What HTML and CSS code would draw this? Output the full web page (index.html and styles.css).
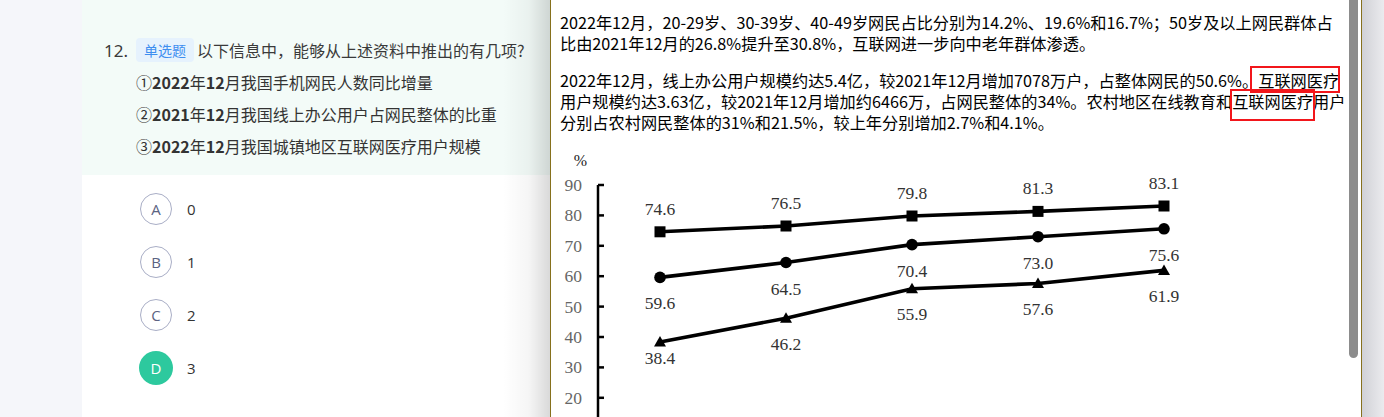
FILE: index.html
```html
<!DOCTYPE html>
<html lang="zh-CN">
<head>
    <meta charset="UTF-8">
    <meta name="viewport" content="width=device-width, initial-scale=1.0">
    <title>单选题</title>
    <link rel="stylesheet" href="styles.css">
</head>
<body>
    <div class="page">
        <aside class="side"></aside>
        <main class="main">
            <section class="question">
                <div class="q-head">
                    <span class="q-num">12.</span>
                    <span class="q-tag">单选题</span>
                    <span class="q-text">以下信息中，能够从上述资料中推出的有几项?</span>
                </div>
                <ul class="q-items">
                    <li>①<b>2022</b>年<b>12</b>月我国手机网民人数同比增量</li>
                    <li>②<b>2021</b>年<b>12</b>月我国线上办公用户占网民整体的比重</li>
                    <li>③<b>2022</b>年<b>12</b>月我国城镇地区互联网医疗用户规模</li>
                </ul>
            </section>

            <ul class="options">
                <li class="option"><span class="opt-key">A</span><span class="opt-text">0</span></li>
                <li class="option"><span class="opt-key">B</span><span class="opt-text">1</span></li>
                <li class="option"><span class="opt-key">C</span><span class="opt-text">2</span></li>
                <li class="option"><span class="opt-key opt-key-active">D</span><span class="opt-text">3</span></li>
            </ul>
        </main>
    </div>

    <!-- 资料弹窗 -->
    <div class="popup">
        <div class="popup-body">
            <p>2022年12月，20-29岁、30-39岁、40-49岁网民占比分别为14.2%、19.6%和16.7%；50岁及以上网民群体占<br>比由2021年12月的26.8%提升至30.8%，互联网进一步向中老年群体渗透。</p>
            <p>2022年12月，线上办公用户规模约达5.4亿，较2021年12月增加7078万户，占整体网民的50.6%。<span class="mark mark-a">互联网医疗</span><br>用户规模约达3.63亿，较2021年12月增加约6466万，占网民整体的34%。农村地区在线教育和<span class="mark mark-b">互联网医疗</span>用户<br>分别占农村网民整体的31%和21.5%，较上年分别增加2.7%和4.1%。</p>

            <svg class="chart" width="700" height="280" viewBox="0 0 700 280">
                <text class="unit" x="20.5" y="26">%</text>

                <g class="axis">
                    <line x1="38" y1="45" x2="38" y2="280"/>
                    <line x1="38" y1="45" x2="44" y2="45"/>
                    <line x1="38" y1="75.4" x2="44" y2="75.4"/>
                    <line x1="38" y1="105.8" x2="44" y2="105.8"/>
                    <line x1="38" y1="136.2" x2="44" y2="136.2"/>
                    <line x1="38" y1="166.6" x2="44" y2="166.6"/>
                    <line x1="38" y1="197" x2="44" y2="197"/>
                    <line x1="38" y1="227.4" x2="44" y2="227.4"/>
                    <line x1="38" y1="257.8" x2="44" y2="257.8"/>
                </g>
                <g class="ticks">
                    <text x="22" y="51">90</text>
                    <text x="22" y="81.4">80</text>
                    <text x="22" y="111.8">70</text>
                    <text x="22" y="142.2">60</text>
                    <text x="22" y="172.6">50</text>
                    <text x="22" y="203">40</text>
                    <text x="22" y="233.4">30</text>
                    <text x="22" y="263.8">20</text>
                </g>

                <g class="series">
                    <polyline points="100,91.8 226,86 352,76 478,71.4 604,66"/>
                    <polyline points="100,137.4 226,122.5 352,104.6 478,96.7 604,88.8"/>
                    <polyline points="100,201.9 226,178.2 352,148.7 478,143.5 604,130.4"/>
                </g>
                <g class="markers">
                    <rect x="94.5" y="86.3" width="11" height="11"/>
                    <rect x="220.5" y="80.5" width="11" height="11"/>
                    <rect x="346.5" y="70.5" width="11" height="11"/>
                    <rect x="472.5" y="65.9" width="11" height="11"/>
                    <rect x="598.5" y="60.5" width="11" height="11"/>

                    <circle cx="100" cy="137.4" r="5.8"/>
                    <circle cx="226" cy="122.5" r="5.8"/>
                    <circle cx="352" cy="104.6" r="5.8"/>
                    <circle cx="478" cy="96.7" r="5.8"/>
                    <circle cx="604" cy="88.8" r="5.8"/>

                    <polygon points="100,195.9 94,206.4 106,206.4"/>
                    <polygon points="226,172.2 220,182.7 232,182.7"/>
                    <polygon points="352,142.7 346,153.2 358,153.2"/>
                    <polygon points="478,137.5 472,148 484,148"/>
                    <polygon points="604,124.4 598,134.9 610,134.9"/>
                </g>
                <g class="values">
                    <text x="100" y="74.8">74.6</text>
                    <text x="226" y="69">76.5</text>
                    <text x="352" y="59">79.8</text>
                    <text x="478" y="54.4">81.3</text>
                    <text x="604" y="49">83.1</text>

                    <text x="100" y="169.4">59.6</text>
                    <text x="226" y="154.5">64.5</text>
                    <text x="352" y="136.6">70.4</text>
                    <text x="478" y="128.7">73.0</text>
                    <text x="604" y="120.8">75.6</text>

                    <text x="100" y="224">38.4</text>
                    <text x="226" y="210">46.2</text>
                    <text x="352" y="180">55.9</text>
                    <text x="478" y="175">57.6</text>
                    <text x="604" y="162">61.9</text>
                </g>
            </svg>
        </div>
        <div class="scrollbar"></div>
    </div>
</body>
</html>
```

FILE: styles.css
```css
/* 页面基础 */
body {
    margin: 0;
    height: 417px;
    overflow: hidden;
    background: #fff;
    font-family: "Noto Sans CJK SC", "Noto Sans", sans-serif;
    color: #333;
}
ul {
    list-style: none;
    margin: 0;
    padding: 0;
}
.page {
    display: flex;
    height: 417px;
}
.side {
    width: 82px;
    flex-shrink: 0;
    background: #f5f6fa;
}
.main {
    flex: 1;
    background: #fff;
}

/* 题干 */
.question {
    background: #f3fbf8;
    padding: 38px 0 13px 22px;
    height: 124px;
}
.q-head {
    display: flex;
    align-items: center;
    height: 24px;
    font-size: 16px;
}
.q-num {
    width: 32px;
    font-family: "Noto Sans", sans-serif;
    font-size: 17px;
    color: #3a3a3a;
}
.q-tag {
    height: 24px;
    line-height: 24px;
    padding: 0 8px;
    margin-right: 3px;
    border-radius: 4px;
    background: #e6f2fd;
    color: #3d8ef0;
    font-size: 14px;
}
.q-text {
    color: #3a3a3a;
}
.q-items {
    margin-top: 4px;
    padding-left: 32px;
}
.q-items li {
    height: 32px;
    line-height: 32px;
    font-size: 16px;
    color: #333;
}
.q-items b {
    font-weight: 700;
}

/* 选项 */
.options {
    padding: 18px 0 0 58px;
}
.option {
    display: flex;
    align-items: center;
    height: 32px;
    margin-bottom: 21px;
}
.opt-key {
    width: 30px;
    height: 30px;
    border: 1px solid #a9aec6;
    border-radius: 50%;
    display: flex;
    align-items: center;
    justify-content: center;
    font-family: "Open Sans", sans-serif;
    font-size: 15px;
    color: #5b6382;
}
.opt-key-active {
    background: #2dc99e;
    border-color: #2dc99e;
    box-shadow: 0 0 0 1px #2dc99e;
    color: #fff;
}
.opt-text {
    margin-left: 15px;
    font-family: "Open Sans", sans-serif;
    font-size: 15px;
    color: #333;
}

/* 资料弹窗 */
.popup {
    position: absolute;
    top: 0;
    left: 550px;
    width: 810px;
    height: 417px;
    background: #fff;
    border-left: 1px solid #86701c;
    border-right: 1px solid #86701c;
}
.popup::before {
    content: "";
    position: absolute;
    top: 0;
    bottom: 0;
    left: -48px;
    width: 47px;
    background: linear-gradient(to right, rgba(0,0,0,0), rgba(0,0,0,0.04) 55%, rgba(0,0,0,0.15));
}
.popup::after {
    content: "";
    position: absolute;
    top: 0;
    bottom: 0;
    left: calc(100% + 1px);
    width: 22px;
    background: linear-gradient(to right, #d0d1d6, #ebebee);
}
.popup-body {
    padding: 12px 0 0 9px;
    height: 405px;
    overflow: hidden;
}
.popup-body p {
    margin: 0 0 16px;
    font-size: 16.2px;
    line-height: 21px;
    color: #000;
    white-space: nowrap;
}
.popup-body p:last-of-type {
    margin-bottom: 0;
}
.mark {
    position: relative;
}
.mark::after {
    content: "";
    position: absolute;
    border: 2px solid #f2161b;
}
.mark-a::after {
    left: -8px;
    right: -1px;
    top: -2px;
    bottom: -1px;
}
.mark-b::after {
    left: -2px;
    right: -2px;
    top: 0;
    bottom: -8px;
}
.scrollbar {
    position: absolute;
    top: 0;
    right: 3px;
    width: 9px;
    height: 358px;
    background: #8c8c8c;
    border-radius: 0 0 5px 5px;
}

/* 折线图 */
.chart {
    display: block;
    margin-top: 7px;
    font-family: "Liberation Serif", serif;
    font-size: 17.5px;
}
.chart .unit {
    text-anchor: middle;
    fill: #222;
    font-size: 16px;
}
.chart .axis line {
    stroke: #000;
    stroke-width: 2.5;
}
.chart .ticks text {
    text-anchor: end;
    fill: #666;
}
.chart .series polyline {
    fill: none;
    stroke: #000;
    stroke-width: 3.6;
}
.chart .markers * {
    fill: #000;
}
.chart .values text {
    text-anchor: middle;
    fill: #333;
}
```
